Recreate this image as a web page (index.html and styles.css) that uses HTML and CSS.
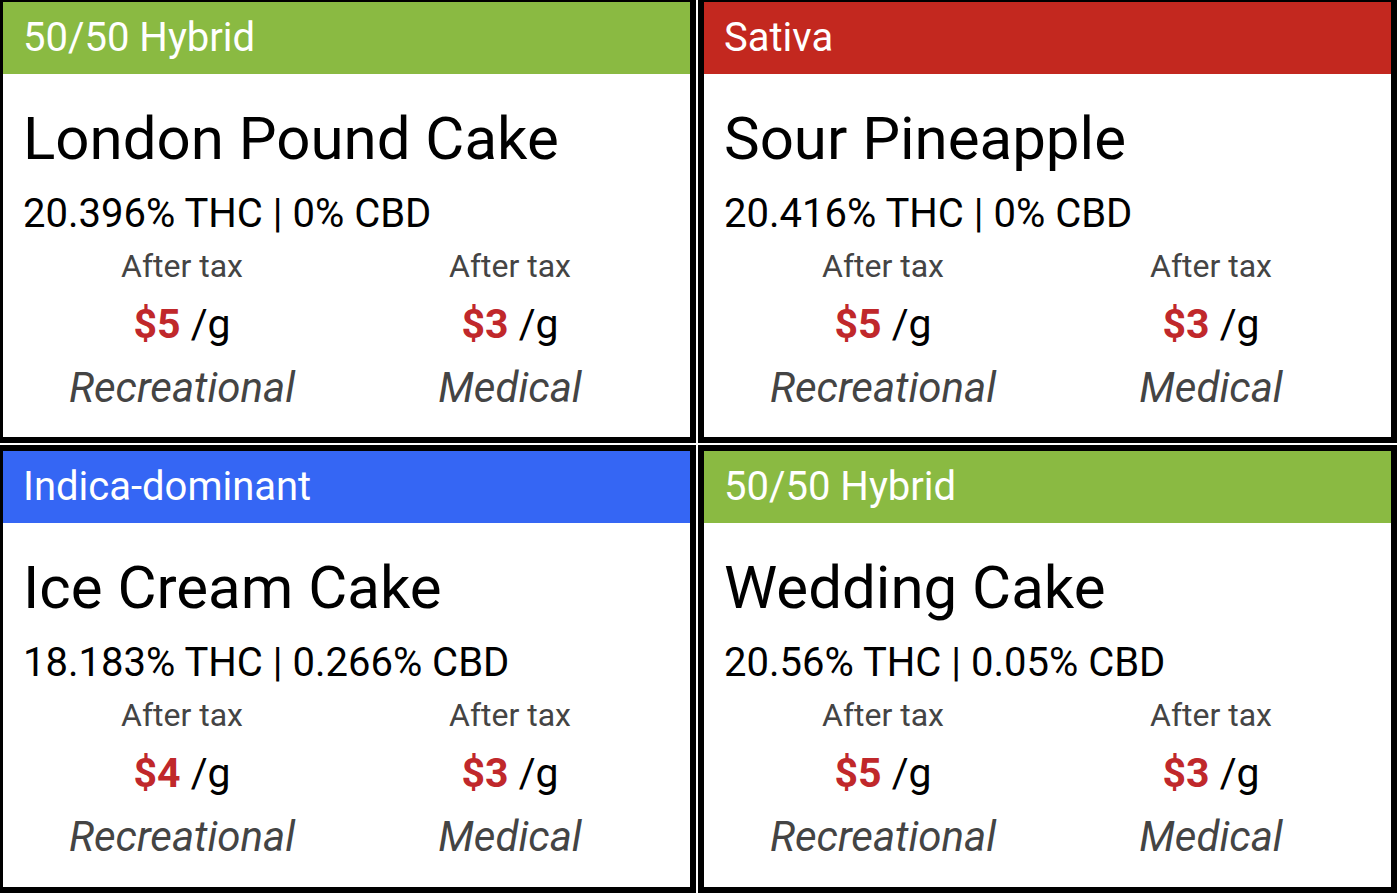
FILE: index.html
```html
<!DOCTYPE html>
<html lang="en">
<head>
    <meta charset="UTF-8">
    <meta name="viewport" content="width=device-width, initial-scale=1.0">
    <title>Strain Menu</title>
    <link rel="stylesheet" href="styles.css">
</head>
<body>
    <div class="menu">
        <div class="card">
            <div class="card-type hybrid">50/50 Hybrid</div>
            <div class="card-body">
                <h2 class="strain-name">London Pound Cake</h2>
                <p class="potency">20.396% THC | 0% CBD</p>
                <div class="prices">
                    <div class="price">
                        <span class="price-note">After tax</span>
                        <span class="price-value"><strong>$5</strong> /g</span>
                        <span class="price-kind">Recreational</span>
                    </div>
                    <div class="price">
                        <span class="price-note">After tax</span>
                        <span class="price-value"><strong>$3</strong> /g</span>
                        <span class="price-kind">Medical</span>
                    </div>
                </div>
            </div>
        </div>

        <div class="card">
            <div class="card-type sativa">Sativa</div>
            <div class="card-body">
                <h2 class="strain-name">Sour Pineapple</h2>
                <p class="potency">20.416% THC | 0% CBD</p>
                <div class="prices">
                    <div class="price">
                        <span class="price-note">After tax</span>
                        <span class="price-value"><strong>$5</strong> /g</span>
                        <span class="price-kind">Recreational</span>
                    </div>
                    <div class="price">
                        <span class="price-note">After tax</span>
                        <span class="price-value"><strong>$3</strong> /g</span>
                        <span class="price-kind">Medical</span>
                    </div>
                </div>
            </div>
        </div>

        <div class="card">
            <div class="card-type indica">Indica-dominant</div>
            <div class="card-body">
                <h2 class="strain-name">Ice Cream Cake</h2>
                <p class="potency">18.183% THC | 0.266% CBD</p>
                <div class="prices">
                    <div class="price">
                        <span class="price-note">After tax</span>
                        <span class="price-value"><strong>$4</strong> /g</span>
                        <span class="price-kind">Recreational</span>
                    </div>
                    <div class="price">
                        <span class="price-note">After tax</span>
                        <span class="price-value"><strong>$3</strong> /g</span>
                        <span class="price-kind">Medical</span>
                    </div>
                </div>
            </div>
        </div>

        <div class="card">
            <div class="card-type hybrid">50/50 Hybrid</div>
            <div class="card-body">
                <h2 class="strain-name">Wedding Cake</h2>
                <p class="potency">20.56% THC | 0.05% CBD</p>
                <div class="prices">
                    <div class="price">
                        <span class="price-note">After tax</span>
                        <span class="price-value"><strong>$5</strong> /g</span>
                        <span class="price-kind">Recreational</span>
                    </div>
                    <div class="price">
                        <span class="price-note">After tax</span>
                        <span class="price-value"><strong>$3</strong> /g</span>
                        <span class="price-kind">Medical</span>
                    </div>
                </div>
            </div>
        </div>
    </div>
</body>
</html>
```

FILE: styles.css
```css
* {
    margin: 0;
    padding: 0;
    box-sizing: border-box;
    font-family: Roboto, 'Liberation Sans', sans-serif;
}

body {
    background-color: #ffffff;
    color: #000000;
    overflow: hidden;
}

.menu {
    display: grid;
    grid-template-columns: 699px 699px;
    grid-template-rows: 447px 448px;
    gap: 2px;
    margin: -4px 0 0 -3px;
}

.card {
    border: 6px solid #000000;
    background-color: #ffffff;
    line-height: 1.2;
}

.card-type {
    height: 72px;
    line-height: 72px;
    padding: 0 20px;
    font-size: 40px;
    color: #ffffff;
}

.card-type.hybrid {
    background-color: #8aba42;
}

.card-type.sativa {
    background-color: #c3281f;
}

.card-type.indica {
    background-color: #3566f4;
}

.card-body {
    padding: 0 20px;
}

.strain-name {
    font-size: 60px;
    font-weight: 400;
    margin-top: 29px;
}

.potency {
    font-size: 40px;
    margin-top: 15px;
}

.prices {
    display: grid;
    grid-template-columns: 328px 328px;
    margin: 9px 0 0 -5px;
}

.price {
    display: flex;
    flex-direction: column;
    align-items: center;
}

.price-note {
    font-size: 32px;
    color: #444444;
}

.price-value {
    font-size: 41px;
    margin-top: 15px;
}

.price-value strong {
    font-weight: 700;
    color: #c0282b;
}

.price-kind {
    font-size: 42px;
    font-style: italic;
    color: #444444;
    margin-top: 13px;
}
```
